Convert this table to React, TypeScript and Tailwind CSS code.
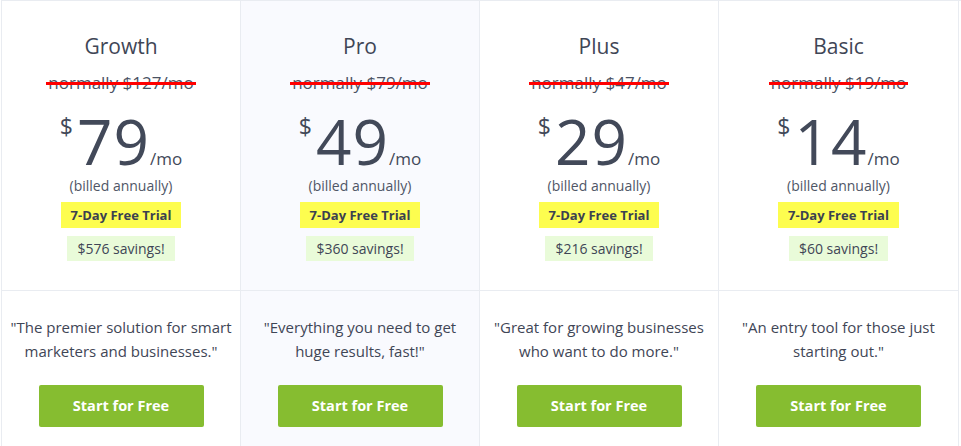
import React from 'react'

type Plan = {
  name: string
  normally: number
  price: number
  savings: number
  quote: string[]
  highlight?: boolean
}

const plans: Plan[] = [
  {
    name: 'Growth',
    normally: 127,
    price: 79,
    savings: 576,
    quote: ['"The premier solution for smart', 'marketers and businesses."'],
  },
  {
    name: 'Pro',
    normally: 79,
    price: 49,
    savings: 360,
    quote: ['"Everything you need to get', 'huge results, fast!"'],
    highlight: true,
  },
  {
    name: 'Plus',
    normally: 47,
    price: 29,
    savings: 216,
    quote: ['"Great for growing businesses', 'who want to do more."'],
  },
  {
    name: 'Basic',
    normally: 19,
    price: 14,
    savings: 60,
    quote: ['"An entry tool for those just', 'starting out."'],
  },
]

function PlanColumn({ plan, last }: { plan: Plan; last: boolean }) {
  return (
    <div
      className={`flex flex-col border-l border-[#e9ecf1] ${last ? 'border-r' : ''} ${
        plan.highlight ? 'bg-[#f9fafe]' : 'bg-white'
      }`}
    >
      <div className="flex h-[290px] flex-col items-center border-b border-[#e9ecf1] pt-[33px]">
        <h2 className="text-[21px] leading-[24px] text-[#3f4656]">{plan.name}</h2>
        <div className="relative mt-[14px] text-[17px] leading-[22px] text-[#4a5263]">
          normally ${plan.normally}/mo
          {/* red strike */}
          <span className="absolute left-[-2px] right-[-2px] top-[10px] h-[3px] bg-[#ff0000]" />
        </div>
        <div className="mt-[16px] flex h-[62px] items-baseline text-[#424959]">
          <span className="mr-[4px] mt-[5px] self-start text-[23px] leading-none">$</span>
          <span className="text-[62px] leading-[62px] tracking-[1px]">{plan.price}</span>
          <span className="text-[17px] leading-none">/mo</span>
        </div>
        <div className="mt-[4px] text-[14px] leading-[20px] text-[#4f5666]">(billed annually)</div>
        <div className="mt-[6px] bg-[#fdfd4f] px-[10px] text-[13px] font-bold leading-[26px] text-[#3b4150]">
          7-Day Free Trial
        </div>
        <div className="mt-[8px] bg-[#e9fbd9] px-[10px] text-[14px] leading-[25px] text-[#3f4656]">
          ${plan.savings} savings!
        </div>
      </div>
      <div className="flex flex-col items-center pt-[24px]">
        <p className="text-center text-[15px] leading-[24px] text-[#3f4656]">
          {plan.quote.map((line, i) => (
            <React.Fragment key={i}>
              {line}
              {i < plan.quote.length - 1 && <br />}
            </React.Fragment>
          ))}
        </p>
        <button className="mt-[22px] h-[42px] w-[165px] rounded-[2px] bg-[#86bd30] text-[14.5px] font-bold text-white">
          Start for Free
        </button>
      </div>
    </div>
  )
}

export default function App() {
  return (
    <div
      className="h-[446px] w-[961px] overflow-hidden bg-white pl-px"
      style={{ fontFamily: '"Open Sans", "Liberation Sans", sans-serif' }}
    >
      <div className="grid h-full grid-cols-[239px_239px_239px_241px] border-t border-[#e9ecf1]">
        {plans.map((plan, i) => (
          <PlanColumn key={plan.name} plan={plan} last={i === plans.length - 1} />
        ))}
      </div>
    </div>
  )
}
